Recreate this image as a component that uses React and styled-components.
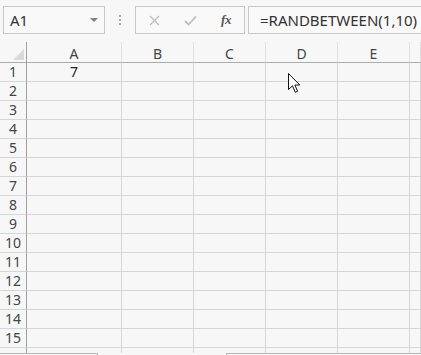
import React from "react";
import styled, { createGlobalStyle } from "styled-components";

const Global = createGlobalStyle`
  html, body { margin: 0; padding: 0; overflow: hidden; background: #f7f7f7; }
  body { font-family: "Noto Sans", "Noto Sans CJK SC", sans-serif; color: #333; }
`;

const Page = styled.div`
  position: relative;
  width: 421px;
  height: 355px;
  overflow: hidden;
  display: flex;
  flex-direction: column;
  background: #f7f7f7;
`;

const Toolbar = styled.div`
  height: 42px;
  flex-shrink: 0;
  display: flex;
  align-items: flex-start;
  padding: 6px 0 0 3px;
  box-sizing: border-box;
`;

const NameBox = styled.div`
  width: 102px;
  height: 28px;
  box-sizing: border-box;
  border: 1px solid #c8c8c8;
  background: #f9f9f9;
  display: flex;
  align-items: center;
  justify-content: space-between;
  padding: 0 5px 0 6px;
  font-size: 15px;
  color: #333;
`;

const Caret = styled.span`
  width: 0;
  height: 0;
  border-left: 4px solid transparent;
  border-right: 4px solid transparent;
  border-top: 4px solid #808080;
  margin-right: 1px;
`;

const Grip = styled.div`
  width: 30px;
  height: 28px;
  display: flex;
  flex-direction: column;
  align-items: center;
  justify-content: center;
  gap: 2px;
`;

const Dot = styled.span`
  width: 2px;
  height: 2px;
  background: #a8a8a8;
`;

const FxButtons = styled.div`
  width: 110px;
  height: 28px;
  box-sizing: border-box;
  border: 1px solid #c8c8c8;
  background: #f9f9f9;
  display: grid;
  grid-template-columns: 36px 36px 36px;
  align-items: center;
  justify-items: center;
`;

const FxBtn = styled.span`
  display: flex;
  align-items: center;
  justify-content: center;
  color: ${(p) => (p.$active ? "#555" : "#bdbdbd")};
`;

const FxLabel = styled.span`
  font-family: "Liberation Serif", "DejaVu Serif", serif;
  font-style: italic;
  font-weight: bold;
  font-size: 13px;
  color: #555;
  letter-spacing: -0.5px;
`;

const FormulaInput = styled.div`
  flex: 1;
  margin-left: 3px;
  height: 28px;
  box-sizing: border-box;
  border: 1px solid #c8c8c8;
  border-right: none;
  background: #f9f9f9;
  display: flex;
  align-items: center;
  padding-left: 11px;
  font-size: 15px;
  color: #333;
  white-space: nowrap;
`;

const Sheet = styled.div`
  height: 311px;
  flex-shrink: 0;
  overflow: hidden;
  display: grid;
  grid-template-columns: 27px 95px 72px 72px 72px 72px 1fr;
  grid-auto-rows: 19px;
  grid-template-rows: 21px;
  font-size: 14px;
`;

const Corner = styled.div`
  box-sizing: border-box;
  border-right: 1px solid #a0a0a0;
  border-bottom: 1px solid #ababab;
  display: flex;
  align-items: flex-end;
  justify-content: flex-end;
  padding: 0 2px 2px 0;
`;

const CornerTri = styled.span`
  width: 0;
  height: 0;
  border-left: 11px solid transparent;
  border-bottom: 11px solid #d9d9d9;
`;

const ColHead = styled.div`
  box-sizing: border-box;
  border-right: 1px solid #e0e0e0;
  border-bottom: 1px solid #ababab;
  display: flex;
  align-items: center;
  justify-content: center;
  padding-top: 3px;
  color: #444;
`;

const RowHead = styled.div`
  box-sizing: border-box;
  border-right: 1px solid #a0a0a0;
  border-bottom: 1px solid #d6d6d6;
  display: flex;
  align-items: center;
  justify-content: center;
  color: #444;
  line-height: 1;
`;

const Cell = styled.div`
  box-sizing: border-box;
  border-right: 1px solid #d6d6d6;
  border-bottom: 1px solid #d6d6d6;
  display: flex;
  align-items: center;
  justify-content: center;
  color: #222;
  line-height: 1;
`;

const BottomBar = styled.div`
  height: 20px;
  flex-shrink: 0;
  display: flex;
`;

const TabBox = styled.div`
  width: ${(p) => p.$w}px;
  flex-shrink: 0;
  box-sizing: border-box;
  border-top: 1px solid #b4b4b4;
  border-right: 1px solid #b4b4b4;
  background: #fbfbfb;
`;

const Spacer = styled.div`
  width: ${(p) => p.$w}px;
  flex-shrink: 0;
`;

const ScrollBox = styled.div`
  flex: 1;
  box-sizing: border-box;
  border-top: 1px solid #b4b4b4;
  border-left: 1px solid #b4b4b4;
  background: #fbfbfb;
`;

const Pointer = styled.svg`
  position: absolute;
  left: 288px;
  top: 73px;
  pointer-events: none;
`;

const cols = ["A", "B", "C", "D", "E", ""];
const rows = Array.from({ length: 16 }, (_, i) => i + 1);

export default function App() {
  return (
    <>
      <Global />
      <Page>
        <Toolbar>
          <NameBox>
            <span>A1</span>
            <Caret />
          </NameBox>
          <Grip>
            <Dot />
            <Dot />
            <Dot />
          </Grip>
          <FxButtons>
            <FxBtn>
              <svg width="11" height="11" viewBox="0 0 11 11">
                <path d="M1 1 L10 10 M10 1 L1 10" stroke="currentColor" strokeWidth="1.3" />
              </svg>
            </FxBtn>
            <FxBtn>
              <svg width="13" height="11" viewBox="0 0 13 11">
                <path d="M1 6 L4.5 9.5 L12 1.5" stroke="currentColor" strokeWidth="1.8" fill="none" />
              </svg>
            </FxBtn>
            <FxBtn $active>
              <FxLabel>fx</FxLabel>
            </FxBtn>
          </FxButtons>
          <FormulaInput>=RANDBETWEEN(1,10)</FormulaInput>
        </Toolbar>
        <Sheet>
          <Corner>
            <CornerTri />
          </Corner>
          {cols.map((c, i) => (
            <ColHead key={"h" + i}>{c}</ColHead>
          ))}
          {rows.map((r) => (
            <React.Fragment key={r}>
              <RowHead>{r <= 15 ? r : ""}</RowHead>
              {cols.map((c, i) => (
                <Cell key={c + i}>{r === 1 && i === 0 ? "7" : ""}</Cell>
              ))}
            </React.Fragment>
          ))}
        </Sheet>
        <BottomBar>
          <TabBox $w={98} />
          <Spacer $w={128} />
          <ScrollBox />
        </BottomBar>
        <Pointer width="13" height="21" viewBox="0 0 13 21">
          <path
            d="M0.5 0.5 L0.5 16.5 L4.5 12.8 L7.3 19.3 L9.6 18.3 L6.9 12 L11.8 12 Z"
            fill="#fff"
            stroke="#111"
            strokeWidth="1"
            strokeLinejoin="miter"
          />
        </Pointer>
      </Page>
    </>
  );
}
